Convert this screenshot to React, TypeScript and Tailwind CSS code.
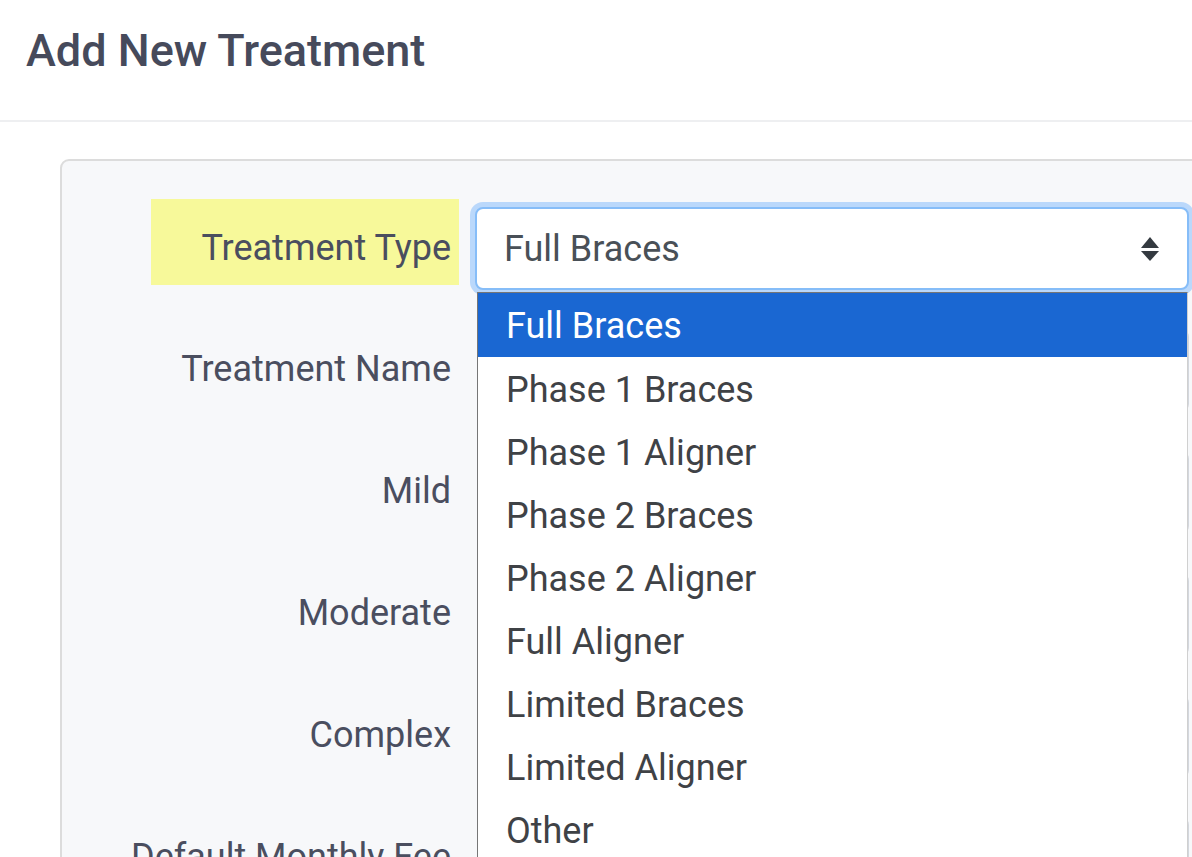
import { useState } from 'react';

const options = [
    'Full Braces',
    'Phase 1 Braces',
    'Phase 1 Aligner',
    'Phase 2 Braces',
    'Phase 2 Aligner',
    'Full Aligner',
    'Limited Braces',
    'Limited Aligner',
    'Other',
];

const otherRows = ['Treatment Name', 'Mild', 'Moderate', 'Complex', 'Default Monthly Fee'];

function SortArrows() {
    return (
        <svg width="18" height="24" viewBox="0 0 18 24" className="text-[#343a40]">
            <path d="M9 0 L18 11 L0 11 Z" fill="currentColor" />
            <path d="M0 14 L18 14 L9 24 Z" fill="currentColor" />
        </svg>
    );
}

export default function App() {
    const [selected] = useState(options[0]);

    return (
        <div className="h-[857px] w-[1192px] overflow-hidden bg-white font-['Roboto',sans-serif]">
            {/* Header */}
            <div className="h-[122px] border-b-2 border-[#eeeff1] px-[26px] pt-[24px]">
                <h4 className="text-[45px] font-medium leading-[1.2] text-[#464a5b]">Add New Treatment</h4>
            </div>

            <div className="pl-[60px] pt-[37px]">
                <div className="w-[1250px] rounded-[9px] border-2 border-[#dcdcdc] bg-[#f7f8fa] pl-[89px] pt-[38px]">
                    {/* Treatment Type */}
                    <div className="mb-[36px] flex h-[86px] gap-[16px]">
                        <label className="flex h-[86px] w-[308px] items-center justify-end bg-[#f7f99a] pr-[8px] pt-[11px] text-[36px] text-[#4a4e5f]">
                            Treatment Type
                        </label>
                        <div className="relative mt-[8px] h-[83px] w-[714px]">
                            <div className="flex h-[83px] items-center justify-between rounded-[8px] border-2 border-[#86bdf8] bg-white pl-[27px] pr-[28px] text-[36px] text-[#495057] shadow-[0_0_0_5px_#bad8fb]">
                                <span>{selected}</span>
                                <SortArrows />
                            </div>
                            {/* Open option list */}
                            <div className="absolute left-[2px] top-[85px] z-10 w-[711px] border border-[#767676] border-r-[#d0d0d0] bg-white">
                                {options.map((opt, idx) => (
                                    <div
                                        key={opt}
                                        className={
                                            idx === 0
                                                ? 'flex h-[64px] items-center bg-[#1a67d2] pl-[28px] pt-[2px] text-[36px] text-white'
                                                : 'flex h-[63px] items-center pl-[28px] pt-[2px] text-[36px] text-[#3f4246]'
                                        }
                                    >
                                        {opt}
                                    </div>
                                ))}
                            </div>
                        </div>
                    </div>

                    {otherRows.map((label) => (
                        <div key={label} className="mb-[36px] flex h-[86px] gap-[16px]">
                            <label className="flex h-[86px] w-[308px] items-center justify-end whitespace-nowrap pr-[8px] pt-[10px] text-[36px] text-[#4a4e5f]">
                                {label}
                            </label>
                            <div className="ml-[3px] mt-[8px] h-[83px] w-[711px] rounded-[8px] border-2 border-[#d3d7de] bg-white" />
                        </div>
                    ))}
                </div>
            </div>
        </div>
    );
}
